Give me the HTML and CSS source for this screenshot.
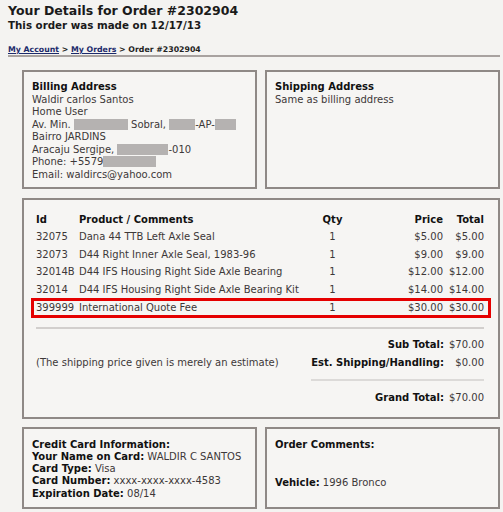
FILE: index.html
```html
<!DOCTYPE html>
<html lang="en">
<head>
    <meta charset="UTF-8">
    <title>Order #2302904</title>
    <link rel="stylesheet" href="styles.css">
</head>
<body>
    <h1 class="page-title">Your Details for Order #2302904</h1>
    <p class="page-sub">This order was made on 12/17/13</p>

    <div class="crumbs">
        <a href="#">My Account</a> &gt; <a href="#">My Orders</a> &gt; Order #2302904
    </div>

    <div class="pair top-pair">
        <div class="box address">
            <div class="box-head">Billing Address</div>
            <div>Waldir carlos Santos</div>
            <div>Home User</div>
            <div>Av. Min. <span class="blur" style="width:54px"></span> Sobral, <span class="blur" style="width:26px"></span>-AP-<span class="blur" style="width:21px"></span></div>
            <div>Bairro JARDINS</div>
            <div>Aracaju Sergipe, <span class="blur" style="width:51px"></span>-010</div>
            <div>Phone: +5579<span class="blur" style="width:53px"></span></div>
            <div>Email: waldircs@yahoo.com</div>
        </div>
        <div class="box address">
            <div class="box-head">Shipping Address</div>
            <div>Same as billing address</div>
        </div>
    </div>

    <div class="box items">
        <table class="lines">
            <colgroup>
                <col class="w-id">
                <col>
                <col class="w-qty">
                <col class="w-price">
                <col class="w-total">
            </colgroup>
            <thead>
                <tr>
                    <th>Id</th>
                    <th>Product / Comments</th>
                    <th class="col-qty">Qty</th>
                    <th class="col-num">Price</th>
                    <th class="col-num">Total</th>
                </tr>
            </thead>
            <tbody>
                <tr>
                    <td>32075</td>
                    <td>Dana 44 TTB Left Axle Seal</td>
                    <td class="col-qty">1</td>
                    <td class="col-num">$5.00</td>
                    <td class="col-num">$5.00</td>
                </tr>
                <tr>
                    <td>32073</td>
                    <td>D44 Right Inner Axle Seal, 1983-96</td>
                    <td class="col-qty">1</td>
                    <td class="col-num">$9.00</td>
                    <td class="col-num">$9.00</td>
                </tr>
                <tr>
                    <td>32014B</td>
                    <td>D44 IFS Housing Right Side Axle Bearing</td>
                    <td class="col-qty">1</td>
                    <td class="col-num">$12.00</td>
                    <td class="col-num">$12.00</td>
                </tr>
                <tr>
                    <td>32014</td>
                    <td>D44 IFS Housing Right Side Axle Bearing Kit</td>
                    <td class="col-qty">1</td>
                    <td class="col-num">$14.00</td>
                    <td class="col-num">$14.00</td>
                </tr>
                <tr class="flagged">
                    <td>399999</td>
                    <td>International Quote Fee</td>
                    <td class="col-qty">1</td>
                    <td class="col-num">$30.00</td>
                    <td class="col-num">$30.00</td>
                </tr>
            </tbody>
        </table>

        <div class="totals">
            <span></span>
            <span class="t-label">Sub Total:</span>
            <span class="t-value">$70.00</span>

            <span class="note">(The shipping price given is merely an estimate)</span>
            <span class="t-label">Est. Shipping/Handling:</span>
            <span class="t-value">$0.00</span>

            <span></span>
            <span class="t-rule"></span>

            <span></span>
            <span class="t-label">Grand Total:</span>
            <span class="t-value">$70.00</span>
        </div>
    </div>

    <div class="pair">
        <div class="box card">
            <div class="box-head">Credit Card Information:</div>
            <div><b>Your Name on Card:</b> WALDIR C SANTOS</div>
            <div><b>Card Type:</b> Visa</div>
            <div><b>Card Number:</b> xxxx-xxxx-xxxx-4583</div>
            <div><b>Expiration Date:</b> 08/14</div>
        </div>
        <div class="box card">
            <div class="box-head">Order Comments:</div>
            <div class="vehicle"><b>Vehicle:</b> 1996 Bronco</div>
        </div>
    </div>
</body>
</html>
```

FILE: styles.css
```css
body {
    margin: 0;
    padding: 3px 3px 0 8px;
    background-color: #f4f3f1;
    font-family: "DejaVu Sans", Verdana, sans-serif;
    font-size: 10px;
    color: #3d3838;
}
.page-title {
    margin: 0;
    font-size: 12.5px;
    line-height: 16px;
    color: #1a1a1a;
}
.page-sub {
    margin: 0;
    font-size: 10.3px;
    font-weight: bold;
    line-height: 13px;
    color: #1a1a1a;
}
.crumbs {
    margin-top: 12px;
    padding-bottom: 0;
    border-bottom: 2px solid #a8a2a0;
    font-size: 7.8px;
    font-weight: bold;
    line-height: 11px;
    color: #222;
}
.crumbs a {
    color: #1c2a6b;
}
.pair {
    display: grid;
    grid-template-columns: 1fr 1fr;
    gap: 8px;
    margin-left: 14px;
}
.top-pair {
    margin-top: 13px;
}
.box {
    border: 2px solid #8f8986;
    background-color: #f6f5f3;
    padding: 9px 8px 8px 8px;
    line-height: 12.5px;
}
.box-head {
    font-weight: bold;
    color: #111;
}
.box b {
    color: #111;
}
.address {
    height: 119px;
    box-sizing: border-box;
}
.blur {
    display: inline-block;
    height: 11px;
    vertical-align: -2px;
    background-color: #b5b2b1;
}
.items {
    margin: 9px 0 8px 14px;
    padding: 11px 8px 10px 8px;
}
.lines {
    width: 100%;
    table-layout: fixed;
    border-collapse: collapse;
}
.w-id {
    width: 43px;
}
.w-qty {
    width: 71px;
}
.w-price {
    width: 60px;
}
.w-total {
    width: 47px;
}
.lines th,
.lines td {
    height: 17.6px;
    padding: 0 0 0 4px;
    text-align: left;
    white-space: nowrap;
}
.lines th {
    color: #111;
}
.lines .col-qty {
    padding: 0 30px 0 0;
    text-align: center;
}
.lines .col-num {
    text-align: right;
    padding-right: 6px;
}
.lines .col-num:nth-child(4) {
    padding-right: 0;
}
.lines tr.flagged {
    outline: 3px solid #e50000;
    outline-offset: -2px;
}
.totals {
    display: grid;
    grid-template-columns: 1fr auto auto;
    column-gap: 5px;
    margin: 10px 6px 0 4px;
    padding-top: 7px;
    border-top: 2px solid #d2cfcd;
    line-height: 18px;
}
.t-label {
    font-weight: bold;
    text-align: right;
    color: #111;
}
.t-value {
    text-align: right;
}
.t-rule {
    grid-column: 2 / 4;
    height: 0;
    margin: 7px 0 8px;
    border-top: 2px solid #dcdad8;
}
.card {
    height: 82px;
    box-sizing: border-box;
    padding-top: 10px;
    line-height: 12.3px;
}
.vehicle {
    margin-top: 26px;
}
```
